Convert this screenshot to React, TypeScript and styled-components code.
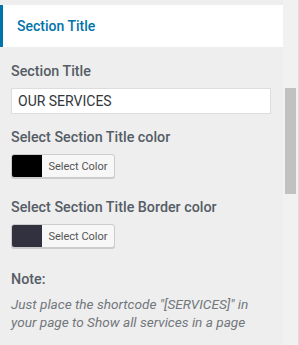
import React from "react";
import styled, { createGlobalStyle } from "styled-components";

const GlobalStyle = createGlobalStyle`
  html, body {
    margin: 0;
    padding: 0;
    background: #eeeeee;
  }
  body {
    font-family: Roboto, "Liberation Sans", sans-serif;
  }
`;

const settings = [
  { label: "Select Section Title color", swatch: "#000000" },
  { label: "Select Section Title Border color", swatch: "#32313f" },
];

export default function App() {
  return (
    <>
      <GlobalStyle />
      <Frame>
        <Panel>
          <SectionHeader>
            <HeaderTitle>Section Title</HeaderTitle>
          </SectionHeader>

          <Body>
            <Field>
              <Label>Section Title</Label>
              <TextInput type="text" defaultValue="OUR SERVICES" />
            </Field>

            {settings.map((s) => (
              <Field key={s.label}>
                <Label>{s.label}</Label>
                <ColorButton type="button">
                  <Swatch color={s.swatch} />
                  <ButtonText>Select Color</ButtonText>
                </ColorButton>
              </Field>
            ))}

            <NoteField>
              <Label>Note:</Label>
              <NoteText>
                Just place the shortcode "[SERVICES]" in your page to Show all
                services in a page
              </NoteText>
            </NoteField>
          </Body>
        </Panel>

        <ScrollTrack>
          <ScrollThumb />
        </ScrollTrack>
      </Frame>
    </>
  );
}

const Frame = styled.div`
  display: flex;
  width: 299px;
  height: 345px;
  overflow: hidden;
  background: #eeeeee;
`;

const Panel = styled.div`
  width: 283px;
  flex-shrink: 0;
  padding-top: 5px;
`;

const SectionHeader = styled.div`
  height: 42px;
  background: #ffffff;
  border-left: 3px solid #0073aa;
  display: flex;
  align-items: center;
  padding-left: 14px;
  box-sizing: border-box;
`;

const HeaderTitle = styled.h3`
  margin: 0;
  font-size: 14px;
  font-weight: 500;
  color: #0073aa;
`;

const Body = styled.div`
  padding: 14px 12px 0 11px;
  display: flex;
  flex-direction: column;
  gap: 13px;
`;

const Field = styled.div`
  display: flex;
  flex-direction: column;
  gap: 7px;
`;

const NoteField = styled(Field)`
  margin-top: 2px;
`;

const Label = styled.label`
  font-size: 14.3px;
  font-weight: 500;
  line-height: 20px;
  color: #555d66;
`;

const TextInput = styled.input`
  box-sizing: border-box;
  width: 260px;
  height: 26px;
  margin: 0;
  padding: 0 6px;
  border: 1px solid #dddddd;
  background: #ffffff;
  font-family: Roboto, "Liberation Sans", sans-serif;
  font-size: 14px;
  color: #32373c;
  outline: none;
`;

const ColorButton = styled.button`
  align-self: flex-start;
  display: flex;
  align-items: stretch;
  box-sizing: border-box;
  width: 104px;
  height: 24px;
  margin: 0 0 6px;
  padding: 0;
  border: 1px solid #cccccc;
  border-radius: 3px;
  background: #f7f7f7;
  box-shadow: 0 1px 0 #cccccc;
  overflow: hidden;
  cursor: pointer;
`;

const Swatch = styled.span<{ color: string }>`
  width: 30px;
  background: ${(p) => p.color};
`;

const ButtonText = styled.span`
  flex: 1;
  display: flex;
  align-items: center;
  justify-content: center;
  font-family: Roboto, "Liberation Sans", sans-serif;
  font-size: 11px;
  color: #555555;
`;

const NoteText = styled.p`
  margin: -1px 0 0;
  font-size: 13.6px;
  font-style: italic;
  line-height: 18px;
  color: #72777c;
  width: 255px;
`;

const ScrollTrack = styled.div`
  width: 15px;
  background: #f1f1f1;
  border-right: 1px solid #dcdcdc;
  padding-top: 88px;
  display: flex;
  justify-content: center;
`;

const ScrollThumb = styled.div`
  width: 11px;
  height: 106px;
  background: #c1c1c1;
`;
